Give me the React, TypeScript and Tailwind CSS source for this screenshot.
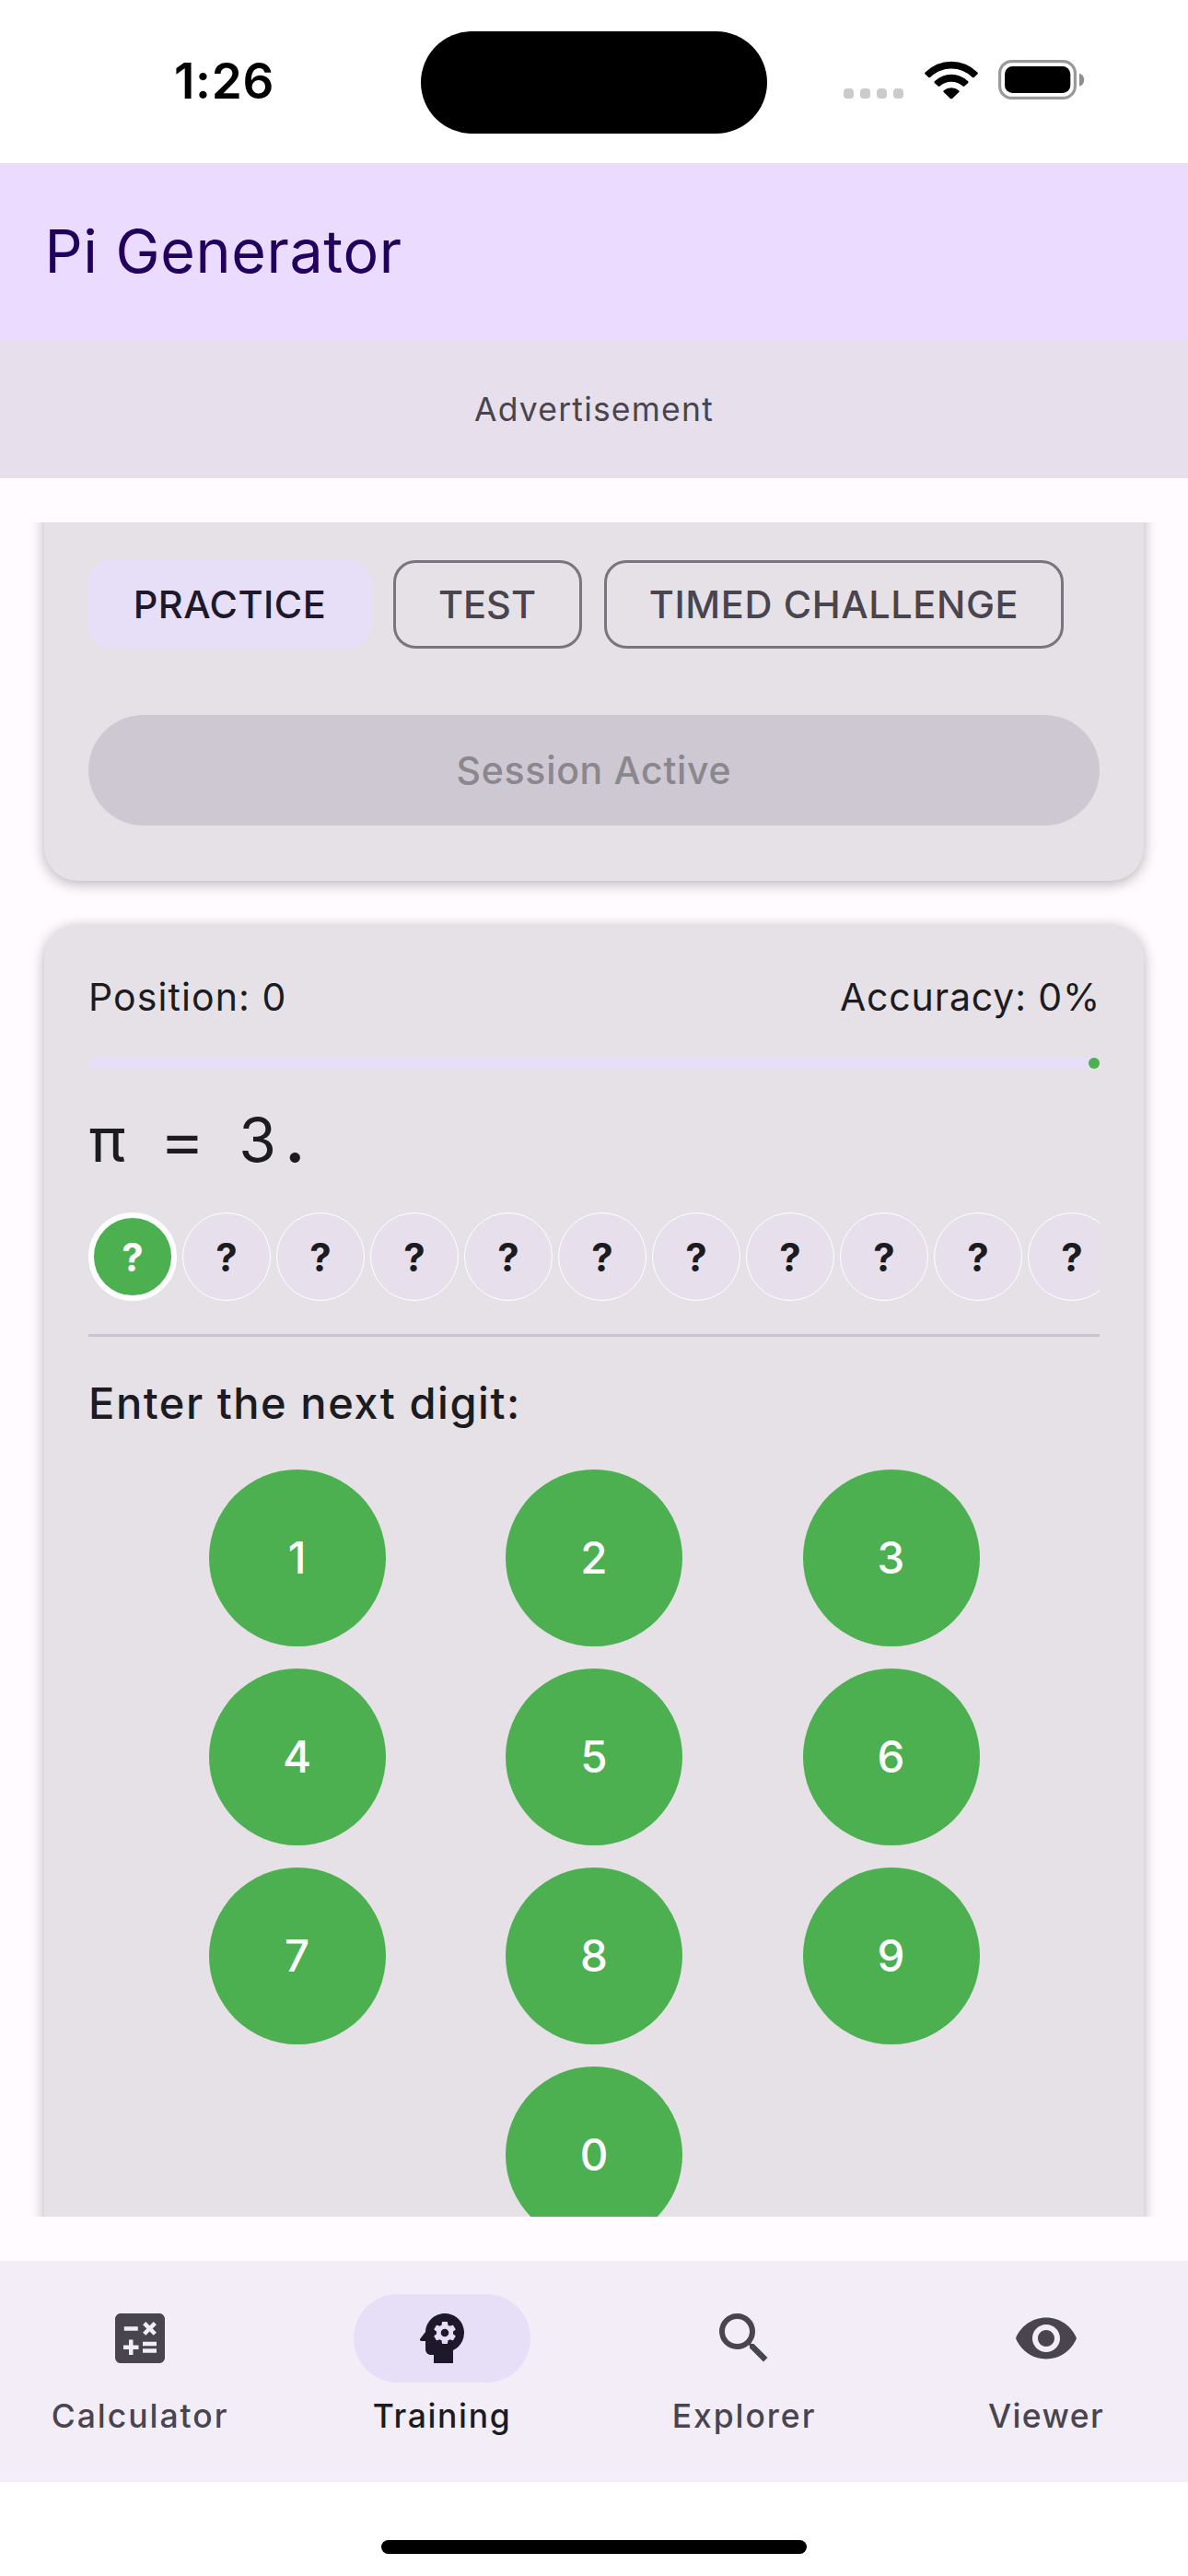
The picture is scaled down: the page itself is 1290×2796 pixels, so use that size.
import type { IconType } from 'react-icons';
import { MdCalculate, MdPsychology, MdSearch, MdVisibility } from 'react-icons/md';

const upcoming = Array.from({ length: 11 }, (_, i) => i);
const keys = ['1', '2', '3', '4', '5', '6', '7', '8', '9'];

function StatusBar() {
  return (
    <div className="grid h-[177px] shrink-0 grid-cols-[457px_376px_1fr] bg-white">
      <div className="pt-[56px] pl-[189px] text-[53px] leading-[64px] font-semibold tracking-[0.7px] text-black">
        1:26
      </div>
      <div className="mt-[33.5px] h-[111px] rounded-full bg-black" />
      <div className="flex pt-[65px] pl-[83px]">
        <div className="mt-[31px] flex gap-[7px]">
          {[0, 1, 2, 3].map((d) => (
            <span key={d} className="size-[11px] rounded-[4px] bg-[#cbcbcb]" />
          ))}
        </div>
        <svg className="ml-[22.500px] h-[43px] w-[58px]" viewBox="0 0 58 43">
          <path d="M.6 13.6a40 40 0 0 1 56.8 0c.6.6.6 1.200 0 1.800l-3.700 3.500c-.5.5-1.200.5-1.700 0a33 33 0 0 0-46 0c-.5.5-1.200.5-1.700 0L.6 15.400c-.6-.6-.6-1.200 0-1.800Z" />
          <path d="M10.800 23.300a26 26 0 0 1 36.400 0c.5.5.5 1.200 0 1.700l-3.900 3.600c-.5.5-1.200.5-1.700 0a18.500 18.500 0 0 0-25.200 0c-.5.5-1.200.5-1.700 0L10.800 25c-.5-.5-.5-1.200 0-1.700Z" />
          <path d="M20.800 33.200a12.600 12.600 0 0 1 16.400 0c.6.500.6 1.200.1 1.700L30 41.900c-.6.600-1.400.600-2 0l-7.300-7c-.5-.5-.5-1.200.1-1.700Z" />
        </svg>
        <svg className="ml-[22.500px] h-[43px] w-[94px]" viewBox="0 0 94 43">
          <rect x="1.600" y="1.600" width="81.800" height="39.800" rx="13" fill="none" stroke="#999999" strokeWidth="3.200" />
          <rect x="7" y="7" width="71.300" height="29" rx="8.500" />
          <path d="M88 14.800a7.200 7.200 0 0 1 0 13.800Z" fill="#8e8e8e" />
        </svg>
      </div>
    </div>
  );
}

function Chip({ label, className }: { label: string; className: string }) {
  return (
    <button
      className={`h-[96px] shrink-0 rounded-[24px] text-[41.5px] leading-[60px] font-medium whitespace-nowrap ${className}`}
    >
      {label}
    </button>
  );
}

function SessionCard() {
  return (
    <section className="-mt-[60px] rounded-[36px] bg-[#e5e1e7] px-[48px] pt-[101px] pb-[60px] shadow-[0_3px_15px_rgba(0,0,0,0.3)]">
      <div className="flex gap-[24px]">
        <Chip label="PRACTICE" className="w-[307px] bg-[#e7def7] tracking-[0.47px] text-[#1d192b]" />
        <Chip label="TEST" className="w-[205px] border-[3px] border-[#79747e] pr-[1px] text-[#49454f]" />
        <Chip
          label="TIMED CHALLENGE"
          className="w-[499px] border-[3px] border-[#79747e] tracking-[0.6px] text-[#49454f]"
        />
      </div>
      <button className="mt-[72px] block h-[120px] w-full rounded-full bg-[#cdc8d2] pt-[2px] text-[41px] font-medium tracking-[0.7px] text-[#8a878d]">
        Session Active
      </button>
    </section>
  );
}

function Key({ digit }: { digit: string }) {
  return (
    <button className="size-[192px] rounded-full bg-[#4caf50] text-[47.5px] font-medium text-white">{digit}</button>
  );
}

function TrainingCard() {
  return (
    <section className="mt-[48px] rounded-[36px] bg-[#e5e1e7] px-[48px] pt-[48px] pb-[48px] text-[#1c1b1f] shadow-[0_3px_15px_rgba(0,0,0,0.3)]">
      <div className="flex justify-between text-[41px] leading-[60px]">
        <span className="tracking-[1.1px]">Position: 0</span>
        <span className="-mr-[1px] tracking-[0.84px]">Accuracy: 0%</span>
      </div>
      <div className="mt-[36px] flex h-[12px] justify-end rounded-[6px] bg-[#e7def7]">
        <span className="size-[12px] rounded-full bg-[#4caf50]" />
      </div>
      <div className="mt-[35px] flex h-[84px] text-[66px] leading-[84px]">
        <span className="w-[40.8px] text-center">π</span>
        <span className="ml-[40.8px] flex w-[40.8px] justify-center">
          <span className="scale-x-[1.130]">=</span>
        </span>
        <span className="ml-[40.8px] w-[40.8px] text-center">3</span>
        <span className="w-[40.8px] text-center font-bold">.</span>
      </div>
      <div className="mt-[37px] flex gap-[6px] overflow-hidden text-[42px] font-bold">
        {upcoming.map((i) => (
          <span
            key={i}
            className={
              i === 0
                ? 'flex size-[96px] shrink-0 items-center justify-center rounded-full border-[6px] border-white bg-[#4caf50] text-white'
                : 'flex size-[96px] shrink-0 items-center justify-center rounded-full border border-white bg-[#e7e0ec]'
            }
          >
            ?
          </span>
        ))}
      </div>
      <div className="mt-[36px] h-[3px] bg-[#cac4d0]" />
      <h2 className="mt-[36px] text-[47px] leading-[72px] font-medium tracking-[1.54px]">Enter the next digit:</h2>
      <div className="mt-[36px] grid grid-cols-[repeat(3,192px)] justify-evenly gap-y-[24px]">
        {keys.map((k) => (
          <Key key={k} digit={k} />
        ))}
        <span />
        <Key digit="0" />
      </div>
    </section>
  );
}

function NavItem({
  Icon,
  label,
  active = false,
  tracking,
}: {
  Icon: IconType;
  label: string;
  active?: boolean;
  tracking: string;
}) {
  return (
    <div
      className={`flex w-[304px] flex-col items-center pt-[36px] ${active ? 'text-[#1c1b1f]' : 'text-[#49454f]'}`}
    >
      <div
        className={`flex h-[96px] w-[192px] items-center justify-center rounded-full ${active ? 'bg-[#e7def7] text-[#1d192b]' : ''}`}
      >
        <Icon className="size-[72px]" />
      </div>
      <span className={`mt-[13px] text-[35.5px] leading-[48px] font-medium ${tracking}`}>{label}</span>
    </div>
  );
}

export default function App() {
  return (
    <div className="flex h-[2796px] w-[1290px] flex-col overflow-hidden bg-[#fffbff] font-['Inter',sans-serif]">
      <StatusBar />
      <header className="flex h-[192px] shrink-0 items-center bg-[#ebdcff] pl-[48.5px]">
        <h1 className="text-[64.5px] leading-[84px] tracking-[0.66px] text-[#21005d]">Pi Generator</h1>
      </header>
      <div className="flex h-[150px] shrink-0 items-center justify-center bg-[#e7e0ec] pt-[2px] text-[35.5px] tracking-[1.2px] text-[#49454f]">
        Advertisement
      </div>
      <main className="my-[48px] h-[1839px] shrink-0 overflow-hidden px-[48px]">
        <SessionCard />
        <TrainingCard />
      </main>
      <nav className="flex h-[240px] shrink-0 gap-[24px] bg-[#f3edf8]">
        <NavItem Icon={MdCalculate} label="Calculator" tracking="tracking-[1.97px]" />
        <NavItem Icon={MdPsychology} label="Training" tracking="tracking-[1.64px]" active />
        <NavItem Icon={MdSearch} label="Explorer" tracking="tracking-[1.94px]" />
        <NavItem Icon={MdVisibility} label="Viewer" tracking="tracking-[1.4px]" />
      </nav>
      <div className="flex h-[102px] shrink-0 justify-center bg-white pt-[63px]">
        <div className="h-[15px] w-[462px] rounded-full bg-black" />
      </div>
    </div>
  );
}
